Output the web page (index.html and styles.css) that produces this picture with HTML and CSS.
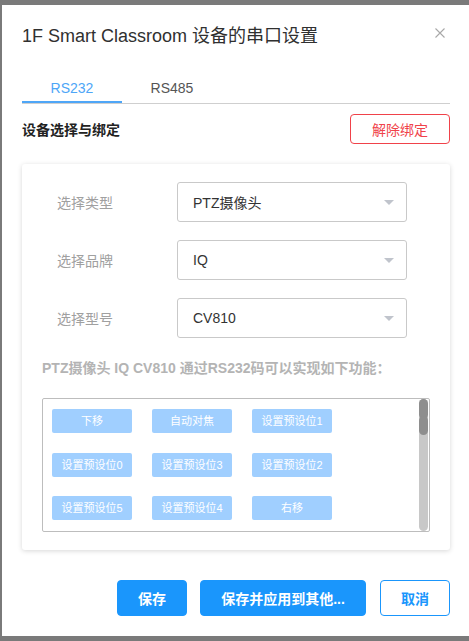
FILE: index.html
```html
<!DOCTYPE html>
<html lang="zh-CN">
<head>
<meta charset="utf-8">
<title>串口设置</title>
<link rel="stylesheet" href="styles.css">
</head>
<body>
<div class="backdrop">
  <div class="modal">
    <div class="modal-header">
      <h1 class="title">1F Smart Classroom 设备的串口设置</h1>
      <svg class="close" width="10" height="10" viewBox="0 0 10 10"><path d="M0.5 0.5 L9.5 9.5 M9.5 0.5 L0.5 9.5" stroke="#a8a8a8" stroke-width="1.1" fill="none"/></svg>
    </div>
    <div class="tabs">
      <div class="tab active">RS232</div>
      <div class="tab">RS485</div>
    </div>
    <div class="section-row">
      <div class="section-title">设备选择与绑定</div>
      <button class="btn-danger">解除绑定</button>
    </div>
    <div class="card">
      <div class="form-row">
        <div class="label">选择类型</div>
        <div class="select"><span>PTZ摄像头</span><i class="arrow"></i></div>
      </div>
      <div class="form-row">
        <div class="label">选择品牌</div>
        <div class="select"><span>IQ</span><i class="arrow"></i></div>
      </div>
      <div class="form-row">
        <div class="label">选择型号</div>
        <div class="select"><span>CV810</span><i class="arrow"></i></div>
      </div>
      <div class="info">PTZ摄像头 IQ CV810 通过RS232码可以实现如下功能：</div>
      <div class="func-box">
        <div class="func-grid">
          <div class="func">下移</div>
          <div class="func">自动对焦</div>
          <div class="func">设置预设位1</div>
          <div class="func">设置预设位0</div>
          <div class="func">设置预设位3</div>
          <div class="func">设置预设位2</div>
          <div class="func">设置预设位5</div>
          <div class="func">设置预设位4</div>
          <div class="func">右移</div>
        </div>
        <div class="scrollbar"><div class="thumb"></div><div class="thumb thumb2"></div></div>
      </div>
    </div>
    <div class="footer">
      <button class="btn-primary w70">保存</button>
      <button class="btn-primary w166">保存并应用到其他...</button>
      <button class="btn-plain w70">取消</button>
    </div>
  </div>
</div>
</body>
</html>
```

FILE: styles.css
```css
* { box-sizing: border-box; }
html, body { margin: 0; padding: 0; }
body {
  font-family: "Liberation Sans", "Noto Sans CJK SC", sans-serif;
  background: #7a7a7a;
  width: 469px;
  height: 641px;
  overflow: hidden;
}
.backdrop {
  width: 469px;
  height: 641px;
  padding: 5px 0 0 2px;
  background: #7a7a7a;
}
.modal {
  width: 467px;
  height: 631px;
  background: #fff;
  padding: 0 19px 0 20px;
  display: flex;
  flex-direction: column;
}
.modal-header {
  display: flex;
  align-items: flex-start;
  justify-content: space-between;
  padding-top: 19px;
  height: 43px;
}
.title {
  margin: 0;
  font-size: 18px;
  line-height: 24px;
  font-weight: normal;
  color: #303030;
}
.close {
  margin-top: 4px;
  margin-right: 5px;
}
.tabs {
  margin-top: 27px;
  display: flex;
  border-bottom: 1px solid #cfcfcf;
}
.tab {
  width: 100px;
  height: 28px;
  line-height: 26px;
  text-align: center;
  font-size: 14px;
  color: #555;
  border-bottom: 2px solid transparent;
}
.tab.active {
  color: #4ea6f7;
  border-bottom-color: #4ea6f7;
}
.section-row {
  margin-top: 10px;
  height: 30px;
  display: flex;
  align-items: center;
  justify-content: space-between;
}
.section-title {
  font-size: 14px;
  font-weight: bold;
  color: #222;
}
.btn-danger {
  width: 100px;
  height: 30px;
  border: 1px solid #f0424a;
  border-radius: 4px;
  background: #fff;
  color: #f0424a;
  font-family: inherit;
  font-size: 14px;
  padding: 0;
}
.card {
  margin-top: 20px;
  height: 386px;
  border-radius: 3px;
  box-shadow: 0 1px 5px rgba(0,0,0,0.16);
  padding: 18px 0 0 0;
  display: flex;
  flex-direction: column;
}
.form-row {
  display: flex;
  align-items: center;
  padding-left: 35px;
  margin-bottom: 18px;
}
.form-row:nth-child(3) { margin-bottom: 0; }
.label {
  width: 120px;
  font-size: 14px;
  color: #a0a0a0;
}
.select {
  width: 230px;
  height: 40px;
  border: 1px solid #c9c9c9;
  border-radius: 3px;
  display: flex;
  align-items: center;
  justify-content: space-between;
  padding: 0 12px 0 15px;
  font-size: 14px;
  color: #333;
}
.arrow {
  width: 0;
  height: 0;
  border-left: 5px solid transparent;
  border-right: 5px solid transparent;
  border-top: 5px solid #c0c4cc;
}
.info {
  margin: 20px 0 0 20px;
  line-height: 20px;
  font-size: 14px;
  font-weight: bold;
  color: #b4b4b4;
}
.func-box {
  margin: 20px 0 0 20px;
  width: 388px;
  height: 134px;
  border: 1px solid #bdbdbd;
  border-radius: 2px;
  display: flex;
  justify-content: space-between;
}
.func-grid {
  padding: 10px 0 0 9px;
  display: grid;
  grid-template-columns: repeat(3, 80px);
  column-gap: 20px;
  row-gap: 20px;
  align-content: start;
}
.func:nth-child(n+7) { margin-top: -1px; }
.func {
  height: 24px;
  line-height: 24px;
  border-radius: 2px;
  background: #a0cfff;
  color: #fff;
  font-size: 11px;
  text-align: center;
}
.scrollbar {
  width: 9px;
  margin-right: 1px;
  background: #c8c8c8;
  border-radius: 5px;
  position: relative;
}
.thumb {
  position: absolute;
  left: 0;
  top: 0;
  width: 9px;
  height: 20px;
  border-radius: 5px;
  background: #8e8e8e;
}
.thumb2 {
  top: 17px;
  height: 19px;
}
.footer {
  margin-top: 30px;
  display: flex;
  justify-content: flex-end;
  gap: 13px;
}
.footer button {
  height: 36px;
  border-radius: 4px;
  font-family: inherit;
  font-size: 14px;
  font-weight: bold;
  padding: 0;
}
.btn-primary {
  background: #1a96fc;
  border: 1px solid #1a96fc;
  color: #fff;
}
.btn-plain {
  background: #fff;
  border: 1px solid #1a96fc;
  color: #1a96fc;
  margin-left: 1px;
}
.w70 { width: 70px; }
.w166 { width: 166px; }
```
